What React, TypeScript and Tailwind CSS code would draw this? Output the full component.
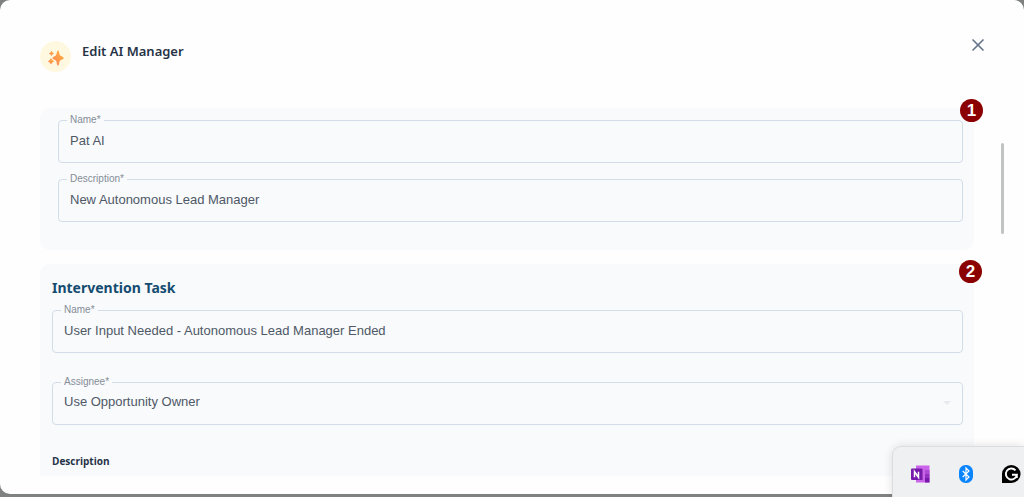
import { useState, type ReactNode } from 'react';
import { X } from 'lucide-react';

const CONTROL =
  'block h-7 mb-2 w-full appearance-none bg-transparent px-[11px] text-[13px] leading-5 text-[#4f5866] outline-none';

function Field({ id, label, children }: { id: string; label: string; children: ReactNode }) {
  return (
    <fieldset className="relative min-w-0 rounded-[4px] border border-[#d3dde8]">
      <legend className="ml-2 px-[3px] text-[10px] leading-3 text-[#868d97]">
        <label htmlFor={id} className="block">{label}*</label>
      </legend>
      {children}
    </fieldset>
  );
}

function Marker({ children }: { children: ReactNode }) {
  return (
    <span className="flex size-[23px] items-center justify-center rounded-full bg-[#8b0000] text-[17px] font-bold leading-none text-white">
      {children}
    </span>
  );
}

function Sparkles() {
  return (
    <svg viewBox="0 0 32 32" className="size-8 shrink-0" aria-hidden="true">
      <defs>
        <linearGradient id="spark" x1="0" y1="1" x2="1" y2="0">
          <stop offset="0" stopColor="#ff8460" />
          <stop offset="1" stopColor="#ffb234" />
        </linearGradient>
      </defs>
      <g fill="url(#spark)">
        <path d="M18 9.500c1.100 0 1.200 3.700 2 4.700s3.800 1.700 3.800 2.800-3 1.700-3.800 2.700-.9 5-2 5-1.200-4-2-5-3.600-1.600-3.600-2.700 2.800-1.800 3.600-2.800.9-4.700 2-4.700z" />
        <path d="M11.500 9.800q.8 2 2.600 2.600-1.800.6-2.600 2.600-.8-2-2.600-2.600 1.800-.6 2.600-2.600z" />
        <path d="M11 17q1.100 2.500 3.200 3.300-2.100.8-3.200 3.300-1.100-2.500-3.200-3.300 2.100-.8 3.200-3.300z" />
      </g>
    </svg>
  );
}

function OneNoteIcon() {
  return (
    <svg viewBox="0 0 19 18" className="h-[18px] w-[19px]" aria-hidden="true">
      <path d="M5 .5h13.500v17H5z" fill="#ca64ea" />
      <path d="M14 5h4.500v4H14z" fill="#ae4bd5" />
      <path d="M14 9h4.500v4H14z" fill="#9332bf" />
      <path d="M14 13h4.500v4.500H14z" fill="#7719aa" />
      <path d="M5 4h7v11H5z" fill="#9b40bd" />
      <rect y="3.500" width="11" height="11.500" rx="1" fill="#7719aa" />
      <path d="M3.500 12.300V6.700l4 5.600V6.700" fill="none" stroke="#fff" strokeWidth="1.500" />
    </svg>
  );
}

function BluetoothIcon() {
  return (
    <svg viewBox="0 0 14 18" className="h-[18px] w-[14px]" aria-hidden="true">
      <rect width="14" height="18" rx="6.500" fill="#0a84ff" />
      <path d="M3.700 6l6.300 6-3 3V3l3 3-6.300 6" fill="none" stroke="#fff" strokeWidth="1.200" />
    </svg>
  );
}

function GrammarIcon() {
  return (
    <svg viewBox="0 0 19 18" className="h-[18px] w-[19px]" aria-hidden="true">
      <path d="M0 18V9a9.300 9 0 1 1 9.300 9z" fill="#000" />
      <path d="M13.500 5.300A5.500 5.500 0 1 0 14.800 9.800H10M14.800 9.800v3.200" fill="none" stroke="#fff" strokeWidth="1.900" />
    </svg>
  );
}

export default function App() {
  const [name, setName] = useState('Pat AI');
  const [description, setDescription] = useState('New Autonomous Lead Manager');
  const [taskName, setTaskName] = useState('User Input Needed - Autonomous Lead Manager Ended');
  const [assignee, setAssignee] = useState('owner');

  return (
    <div className="relative flex h-screen flex-col overflow-hidden bg-[#7f8080] pb-[3px] font-['Liberation_Sans',Arial,sans-serif]">
      <main className="flex min-h-0 flex-1 flex-col rounded-[10px] bg-[#fefefe] pb-[18px]">
        <header className="flex h-[90px] shrink-0 items-start pl-10 pr-9 pt-[35px]">
          <div className="mt-[6px] flex size-[31px] items-center justify-center rounded-full bg-[#fff8e1]">
            <Sparkles />
          </div>
          <h1 className="ml-[11px] mt-[6px] flex-1 font-['Noto_Sans',sans-serif] text-[13px] font-semibold leading-5 text-[#263347]">
            Edit AI Manager
          </h1>
          <button type="button" aria-label="Close" className="text-[#64748b]">
            <X size={20} strokeWidth={2} />
          </button>
        </header>

        <div className="flex min-h-0 flex-1">
          <form className="min-w-0 flex-1 overflow-hidden pl-10 pr-4 pt-[18px]">
            <section className="relative flex flex-col gap-[10px] rounded-[10px] bg-[#f8fafc] pb-7 pl-[18px] pr-[11px] pt-[6px]">
              <div className="absolute -right-[9px] -top-[9px]"><Marker>1</Marker></div>
              <Field id="name" label="Name">
                <input id="name" className={CONTROL} value={name} onChange={(e) => setName(e.target.value)} />
              </Field>
              <Field id="description" label="Description">
                <input id="description" className={CONTROL} value={description} onChange={(e) => setDescription(e.target.value)} />
              </Field>
            </section>

            <section className="relative mt-[14px] rounded-[10px] bg-[#f8fafc] pb-10 pl-3 pr-[11px] pt-[14px]">
              <div className="absolute -right-2 -top-1"><Marker>2</Marker></div>
              <h2 className="mb-[6px] font-['Noto_Sans',sans-serif] text-[14px] font-bold leading-5 text-[#154c70]">
                Intervention Task
              </h2>
              <div className="flex flex-col gap-[23px]">
                <Field id="task-name" label="Name">
                  <input id="task-name" className={CONTROL} value={taskName} onChange={(e) => setTaskName(e.target.value)} />
                </Field>
                <Field id="assignee" label="Assignee">
                  <select id="assignee" className={CONTROL} value={assignee} onChange={(e) => setAssignee(e.target.value)}>
                    <option value="owner">Use Opportunity Owner</option>
                  </select>
                  <svg viewBox="0 0 8 4" className="pointer-events-none absolute right-[11px] top-[13px] h-1 w-2" aria-hidden="true">
                    <path d="M0 0h8L4 4z" fill="#e6e9ee" />
                  </svg>
                </Field>
              </div>
              <h3 className="mt-7 font-['Open_Sans',sans-serif] text-[10px] font-bold leading-4 text-[#263347]">
                Description
              </h3>
            </section>
          </form>

          {/* scroll thumb */}
          <div className="w-[34px] shrink-0 pl-[11px] pt-[53px]">
            <div className="h-[91px] w-[3px] rounded-full bg-[#c0c4c3]" />
          </div>
        </div>
      </main>

      {/* system tray flyout */}
      <div className="absolute bottom-0 right-0 flex h-[51px] w-[132px] items-center gap-[29px] rounded-tl-[9px] border-l border-t border-[#dcdddf] bg-[#eff0f2] pl-[18px] pt-1 shadow-[0_0_10px_rgba(0,0,0,0.12)]">
        <OneNoteIcon />
        <BluetoothIcon />
        <GrammarIcon />
      </div>
    </div>
  );
}
